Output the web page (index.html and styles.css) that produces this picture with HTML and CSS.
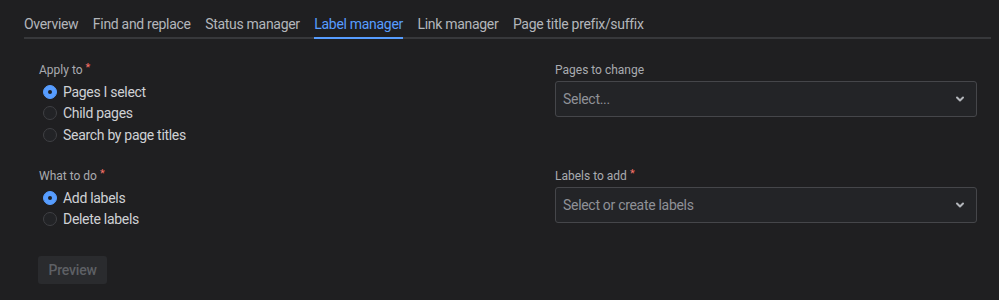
FILE: index.html
```html
<!DOCTYPE html>
<html lang="en">
<head>
    <meta charset="UTF-8">
    <meta name="viewport" content="width=device-width, initial-scale=1.0">
    <title>Bulk operations - Label manager</title>
    <link rel="stylesheet" href="styles.css">
</head>
<body>
    <div class="page">
        <nav class="tabs">
            <a class="tab">Overview</a>
            <a class="tab">Find and replace</a>
            <a class="tab">Status manager</a>
            <a class="tab active">Label manager</a>
            <a class="tab">Link manager</a>
            <a class="tab">Page title prefix/suffix</a>
        </nav>

        <form class="form">
            <div class="field">
                <div class="label">Apply to<span class="req">*</span></div>
                <label class="radio"><span class="dot checked"></span>Pages I select</label>
                <label class="radio"><span class="dot"></span>Child pages</label>
                <label class="radio"><span class="dot"></span>Search by page titles</label>
            </div>
            <div class="field">
                <div class="label">Pages to change</div>
                <div class="select">
                    <span class="placeholder">Select...</span>
                    <svg class="chevron" width="12" height="12" viewBox="0 0 12 12"><path d="M3 4.5 L6 7.5 L9 4.5" fill="none" stroke="currentColor" stroke-width="2" stroke-linecap="round" stroke-linejoin="round"/></svg>
                </div>
            </div>

            <div class="field">
                <div class="label">What to do<span class="req">*</span></div>
                <label class="radio"><span class="dot checked"></span>Add labels</label>
                <label class="radio"><span class="dot"></span>Delete labels</label>
            </div>
            <div class="field">
                <div class="label">Labels to add<span class="req">*</span></div>
                <div class="select">
                    <span class="placeholder">Select or create labels</span>
                    <svg class="chevron" width="12" height="12" viewBox="0 0 12 12"><path d="M3 4.5 L6 7.5 L9 4.5" fill="none" stroke="currentColor" stroke-width="2" stroke-linecap="round" stroke-linejoin="round"/></svg>
                </div>
            </div>
        </form>

        <button class="btn" disabled>Preview</button>
    </div>
</body>
</html>
```

FILE: styles.css
```css
body {
    margin: 0;
    background: #1f1f21;
    color: #cfd1d5;
    font-family: Roboto, "Liberation Sans", sans-serif;
    font-size: 14px;
    letter-spacing: -0.3px;
}
.page {
    padding: 0 8px 0 24px;
}
.tabs {
    display: flex;
    gap: 14.5px;
    border-bottom: 2px solid #37383b;
}
.tab {
    color: #b3b6bb;
    line-height: 20px;
    padding: 14px 0 3px;
    margin-bottom: -2px;
    border-bottom: 2px solid transparent;
    cursor: pointer;
}
.tab.active {
    color: #579dff;
    border-bottom-color: #579dff;
}
.form {
    display: grid;
    grid-template-columns: 1fr 422px;
    column-gap: 16px;
    row-gap: 22.5px;
    padding: 23px 14px 0 15px;
}
.field {
    display: flex;
    flex-direction: column;
}
.label {
    font-size: 12px;
    line-height: 16px;
    color: #a9abb0;
    margin-bottom: 3px;
    letter-spacing: 0;
}
.req {
    position: relative;
    top: -3px;
    color: #f87168;
    font-size: 11px;
    line-height: 0;
    margin-left: 3px;
}
.radio {
    display: flex;
    align-items: center;
    gap: 6px;
    height: 21.5px;
    padding-left: 4px;
    color: #cfd1d5;
}
.dot {
    width: 12px;
    height: 12px;
    border-radius: 50%;
    border: 1px solid #3f4044;
    background: #222326;
}
.dot.checked {
    background: #579dff;
    border-color: #579dff;
    position: relative;
}
.dot.checked::after {
    content: "";
    position: absolute;
    left: 4px;
    top: 4px;
    width: 4px;
    height: 4px;
    border-radius: 50%;
    background: #1f1f21;
}
.select {
    display: flex;
    align-items: center;
    justify-content: space-between;
    height: 34px;
    padding: 0 10px 0 7px;
    border: 1px solid #45464a;
    border-radius: 3px;
    background: #232427;
}
.placeholder {
    color: #8f9197;
}
.chevron {
    color: #b3b6bb;
}
.btn {
    display: block;
    margin: 26px 0 0 14px;
    height: 28px;
    padding: 0 10.5px;
    border: none;
    border-radius: 3px;
    background: #2a2b2e;
    color: #5e6065;
    font-family: inherit;
    font-size: 14px;
    font-weight: 500;
    letter-spacing: -0.2px;
}
```
